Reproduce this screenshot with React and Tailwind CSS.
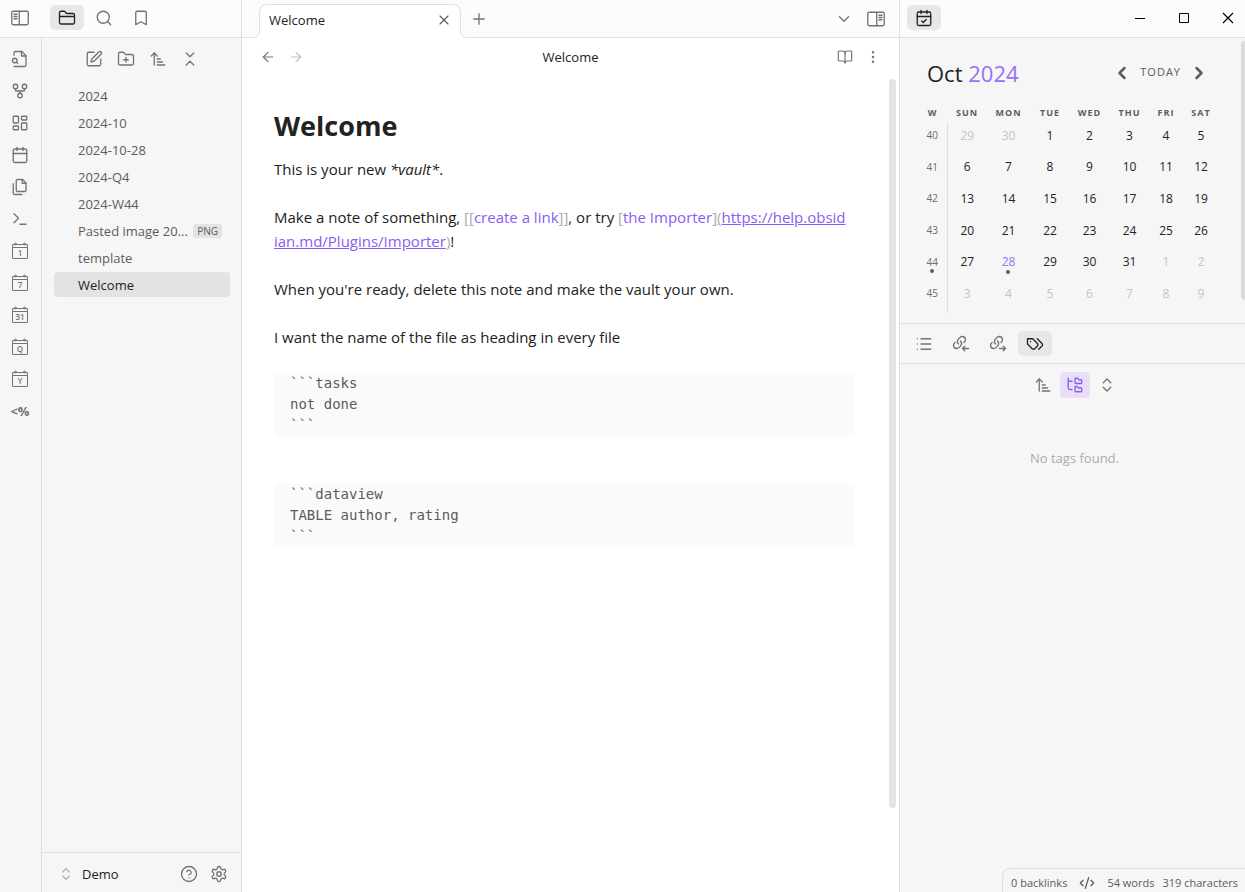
import React from "react";
import {
  ArrowLeft,
  ArrowRight,
  ArrowUpNarrowWide,
  Bookmark,
  BookOpen,
  Calendar,
  CalendarCheck,
  ChevronDown,
  ChevronLeft,
  ChevronRight,
  ChevronsDownUp,
  ChevronsUpDown,
  CircleQuestionMark,
  CodeXml,
  EllipsisVertical,
  FolderClosed,
  FolderPlus,
  FolderTree,
  GitFork,
  LayoutDashboard,
  List,
  Plus,
  Search,
  SquarePen,
  Terminal,
  X,
} from "lucide-react";

const ICON = { size: 18, strokeWidth: 1.75 };

function Svg({ children, size = 18, className = "" }) {
  return (
    <svg
      width={size}
      height={size}
      viewBox="0 0 24 24"
      fill="none"
      stroke="currentColor"
      strokeWidth="1.75"
      strokeLinecap="round"
      strokeLinejoin="round"
      className={className}
      aria-hidden="true"
    >
      {children}
    </svg>
  );
}

function SidebarIcon({ right = false }) {
  return (
    <Svg className={right ? "-scale-x-100" : ""}>
      <rect x="1" y="3" width="22" height="18" rx="2" />
      <path d="M11 3v18M4 7h4M4 10h4M4 13h4" />
    </Svg>
  );
}

function FileSearchIcon() {
  return (
    <Svg>
      <path d="M4 22h14a2 2 0 0 0 2-2V7.5L14.5 2H6a2 2 0 0 0-2 2v3" />
      <path d="M14 2v6h6" />
      <circle cx="5" cy="14" r="3" />
      <path d="m9 18-1.5-1.5" />
    </Svg>
  );
}

function FilesIcon() {
  return (
    <Svg>
      <path d="M15.5 2H8.6c-.4 0-.8.2-1.1.5-.3.3-.5.7-.5 1.1v12.8c0 .4.2.8.5 1.1.3.3.7.5 1.1.5h9.8c.4 0 .8-.2 1.1-.5.3-.3.5-.7.5-1.1V6.5L15.5 2z" />
      <path d="M3 7.6v12.8c0 .4.2.8.5 1.1.3.3.7.5 1.1.5h9.8" />
      <path d="M15 2v5h5" />
    </Svg>
  );
}

function PeriodIcon({ label }) {
  return (
    <svg width="18" height="18" viewBox="0 0 18 18" fill="none" stroke="currentColor" aria-hidden="true">
      <path d="M1.5 2.5h15v14h-15zM1.5 5.5h15" strokeWidth="1" />
      <circle cx="4.5" cy="2" r="1" strokeWidth="1" />
      <circle cx="13.5" cy="2" r="1" strokeWidth="1" />
      <text
        x="9"
        y="14"
        textAnchor="middle"
        fontSize="8"
        fontWeight="600"
        fill="currentColor"
        stroke="none"
      >
        {label}
      </text>
    </svg>
  );
}

const LINK_PATHS = (
  <>
    <path d="M8.7 12a4.9 4.9 0 0 1-.46-6.31l2.56-2.51A4.3 4.3 0 0 1 13.79 2a4.27 4.27 0 0 1 4.21 4.15 4.1 4.1 0 0 1-1.19 2.94l-.91.91" />
    <path d="M11.3 8a4.9 4.9 0 0 1 .45 6.31L9.2 16.82A4.3 4.3 0 0 1 6.21 18 4.27 4.27 0 0 1 2 13.85a4.1 4.1 0 0 1 1.19-2.94L4.1 10" />
  </>
);

function BacklinksIcon() {
  return (
    <Svg>
      {LINK_PATHS}
      <path d="m17 21-3-3 3-3M22 18h-8" />
    </Svg>
  );
}

function OutgoingIcon() {
  return (
    <Svg>
      {LINK_PATHS}
      <path d="m19 21 3-3-3-3M14 18h8" />
    </Svg>
  );
}

function TagsIcon() {
  return (
    <Svg>
      <path d="M9 5H2v7l6.29 6.29c.94.94 2.48.94 3.42 0l3.58-3.58c.94-.94.94-2.48 0-3.42L9 5Z" />
      <path d="M6 9.01V9" />
      <path d="m15 5 6.3 6.3a2.4 2.4 0 0 1 0 3.4L17 19" />
    </Svg>
  );
}

function GearIcon() {
  return (
    <Svg>
      <path d="M12.22 2h-.44a2 2 0 0 0-2 2v.18a2 2 0 0 1-1 1.73l-.43.25a2 2 0 0 1-2 0l-.15-.08a2 2 0 0 0-2.73.73l-.22.38a2 2 0 0 0 .73 2.73l.15.1a2 2 0 0 1 1 1.72v.51a2 2 0 0 1-1 1.74l-.15.09a2 2 0 0 0-.73 2.73l.22.38a2 2 0 0 0 2.73.73l.15-.08a2 2 0 0 1 2 0l.43.25a2 2 0 0 1 1 1.73V20a2 2 0 0 0 2 2h.44a2 2 0 0 0 2-2v-.18a2 2 0 0 1 1-1.73l.43-.25a2 2 0 0 1 2 0l.15.08a2 2 0 0 0 2.73-.73l.22-.39a2 2 0 0 0-.73-2.73l-.15-.08a2 2 0 0 1-1-1.74v-.5a2 2 0 0 1 1-1.74l.15-.09a2 2 0 0 0 .73-2.73l-.22-.38a2 2 0 0 0-2.73-.73l-.15.08a2 2 0 0 1-2 0l-.43-.25a2 2 0 0 1-1-1.73V4a2 2 0 0 0-2-2z" />
      <circle cx="12" cy="12" r="3" />
    </Svg>
  );
}

function TabButton({ label, active = false, children }) {
  return (
    <button
      type="button"
      aria-label={label}
      className={
        active
          ? "flex h-[25px] w-[34px] items-center justify-center rounded-[5px] bg-[#e7e7e7] text-[#222]"
          : "flex h-[25px] w-[34px] items-center justify-center rounded-[5px] text-[#737373]"
      }
    >
      {children}
    </button>
  );
}

function IconButton({ label, children }) {
  return (
    <button type="button" aria-label={label} className="flex h-6 w-6 items-center justify-center">
      {children}
    </button>
  );
}

const RIBBON = [
  ["Quick switcher", <FileSearchIcon />],
  ["Graph view", <GitFork {...ICON} />],
  ["Canvas", <LayoutDashboard {...ICON} />],
  ["Daily note", <Calendar {...ICON} />],
  ["Templates", <FilesIcon />],
  ["Command palette", <Terminal {...ICON} />],
  ["Open daily note", <PeriodIcon label="1" />],
  ["Open weekly note", <PeriodIcon label="7" />],
  ["Open monthly note", <PeriodIcon label="31" />],
  ["Open quarterly note", <PeriodIcon label="Q" />],
  ["Open yearly note", <PeriodIcon label="Y" />],
  ["Templater", <span className="text-[13px] font-bold">&lt;%</span>],
];

const FILES = [
  { name: "2024" },
  { name: "2024-10" },
  { name: "2024-10-28" },
  { name: "2024-Q4" },
  { name: "2024-W44" },
  { name: "Pasted image 20...", tag: "PNG" },
  { name: "template" },
  { name: "Welcome", active: true },
];

function LeftSide() {
  return (
    <aside className="flex w-[242px] shrink-0 flex-col border-r border-[#e0e0e0]">
      <header className="flex h-[38px] shrink-0 items-start border-b border-[#e0e0e0] bg-[#fcfcfc] pt-[5px]">
        <div className="flex h-[25px] w-[50px] items-center pl-[11px] text-[#737373]">
          <button type="button" aria-label="Toggle left sidebar">
            <SidebarIcon />
          </button>
        </div>
        <nav className="flex gap-[3px]">
          <TabButton label="Files" active>
            <FolderClosed {...ICON} />
          </TabButton>
          <TabButton label="Search">
            <Search {...ICON} />
          </TabButton>
          <TabButton label="Bookmarks">
            <Bookmark {...ICON} />
          </TabButton>
        </nav>
      </header>
      <div className="flex min-h-0 flex-1 bg-[#f6f6f6]">
        <nav className="flex w-[42px] shrink-0 flex-col items-center gap-2 border-r border-[#e0e0e0] pt-[9px] pr-px text-[#737373]">
          {RIBBON.map(([label, icon]) => (
            <IconButton key={label} label={label}>
              {icon}
            </IconButton>
          ))}
        </nav>
        <div className="flex min-w-0 flex-1 flex-col">
          <div className="flex justify-center gap-2 pt-[9px] text-[#737373]">
            <IconButton label="New note">
              <SquarePen {...ICON} />
            </IconButton>
            <IconButton label="New folder">
              <FolderPlus {...ICON} />
            </IconButton>
            <IconButton label="Change sort order">
              <ArrowUpNarrowWide {...ICON} />
            </IconButton>
            <IconButton label="Collapse all">
              <ChevronsDownUp {...ICON} />
            </IconButton>
          </div>
          <ul className="flex flex-1 flex-col gap-0.5 pt-3 pr-[11px] pl-3">
            {FILES.map((f) => (
              <li key={f.name}>
                <button
                  type="button"
                  className={
                    f.active
                      ? "flex h-[25px] w-full items-center justify-between rounded bg-[#e3e3e3] pr-2 pl-6 text-left text-[#222]"
                      : "flex h-[25px] w-full items-center justify-between rounded pr-2 pl-6 text-left text-[#5c5c5c]"
                  }
                >
                  <span className="whitespace-nowrap">{f.name}</span>
                  {f.tag && (
                    <span className="rounded-[3px] bg-[#e3e3e3] px-1 text-[10px] leading-[14px] font-medium">{f.tag}</span>
                  )}
                </button>
              </li>
            ))}
          </ul>
          <footer className="flex h-10 shrink-0 items-center border-t border-[#e0e0e0] pt-0.5 pr-[13px] pl-4 text-[#737373]">
            <button type="button" className="flex flex-1 items-center gap-2">
              <ChevronsUpDown size={16} strokeWidth={1.75} className="text-[#ababab]" />
              <span className="font-medium text-[#222]">Demo</span>
            </button>
            <div className="flex gap-3">
              <button type="button" aria-label="Help">
                <CircleQuestionMark {...ICON} />
              </button>
              <button type="button" aria-label="Settings">
                <GearIcon />
              </button>
            </div>
          </footer>
        </div>
      </div>
    </aside>
  );
}

function TabFlare({ className }) {
  return (
    <svg width="7" height="7" viewBox="0 0 7 7" className={className} aria-hidden="true">
      <path d="M0 7V6A5.5 5.5 0 0 0 5.5 0H7V7Z" fill="#fff" />
      <path d="M0 6.5A6.5 6.5 0 0 0 6.5 0" fill="none" stroke="#e0e0e0" />
    </svg>
  );
}

function CodeBlock({ children }) {
  return (
    <pre className="rounded bg-[#fafafa] px-4 font-['DejaVu_Sans_Mono','Liberation_Mono',monospace] text-sm leading-[21px] text-[#5c5c5c]">
      {children}
    </pre>
  );
}

function Main() {
  return (
    <main className="flex min-w-0 flex-1 flex-col bg-white">
      <header className="flex h-[38px] shrink-0 items-end justify-between border-b border-[#e0e0e0] bg-[#fcfcfc] pr-3.5 pl-[17px]">
        <div className="flex items-end gap-1.5">
          <div className="relative -mb-px flex h-[34px] w-[202px] items-center justify-between rounded-t-lg border border-b-0 border-[#e0e0e0] bg-white pr-2 pb-[3px] pl-[9px]">
            <TabFlare className="absolute bottom-0 -left-[7px]" />
            <TabFlare className="absolute -right-[7px] bottom-0 -scale-x-100" />
            <span className="text-[#222]">Welcome</span>
            <button type="button" aria-label="Close tab" className="text-[#5c5c5c]">
              <X size={16} strokeWidth={1.75} />
            </button>
          </div>
          <button type="button" aria-label="New tab" className="flex h-[37px] w-6 items-center justify-center text-[#737373]">
            <Plus {...ICON} />
          </button>
        </div>
        <div className="flex h-[37px] items-center gap-3.5 text-[#737373]">
          <button type="button" aria-label="Tab list">
            <ChevronDown {...ICON} />
          </button>
          <button type="button" aria-label="Toggle right sidebar">
            <SidebarIcon right />
          </button>
        </div>
      </header>
      <div className="flex h-[38px] shrink-0 items-center justify-between px-[18px] pb-px text-[#737373]">
        <div className="flex gap-3">
          <button type="button" aria-label="Back">
            <ArrowLeft size={16} strokeWidth={1.75} />
          </button>
          <button type="button" aria-label="Forward" className="text-[#c0c0c0]">
            <ArrowRight size={16} strokeWidth={1.75} />
          </button>
        </div>
        <span className="text-[#222]">Welcome</span>
        <div className="flex gap-3">
          <button type="button" aria-label="Reading view">
            <BookOpen size={16} strokeWidth={1.75} />
          </button>
          <button type="button" aria-label="More options">
            <EllipsisVertical size={16} strokeWidth={1.75} />
          </button>
        </div>
      </div>
      <div className="flex min-h-0 flex-1 justify-between pr-[3px] pl-8">
        <article className="w-[581px] pt-[30px] text-[15px] leading-6 text-[#222]">
          <h1 className="text-[27px] leading-10 font-bold">Welcome</h1>
          <p className="mt-[11px]">
            This is your new <em>*vault*</em>.
          </p>
          <p className="mt-6 whitespace-nowrap">
            Make a note of something, <span className="text-[#ababab]">[[</span>
            <a href="#create" className="text-[#8a5cf5]">create a link</a>
            <span className="text-[#ababab]">]]</span>, or try <span className="text-[#ababab]">[</span>
            <a href="#importer" className="text-[#8a5cf5]">the Importer</a>
            <span className="text-[#ababab]">]</span>
            <span className="text-[#ababab] underline">(</span>
            <a href="#url" className="text-[#8a5cf5] underline">
              https://help.obsid
              <br />
              ian.md/Plugins/Importer
            </a>
            <span className="text-[#ababab] underline">)</span>!
          </p>
          <p className="mt-6">When you're ready, delete this note and make the vault your own.</p>
          <p className="mt-6">I want the name of the file as heading in every file</p>
          <div className="mt-6 flex flex-col gap-12">
            <CodeBlock>{"```tasks\nnot done\n```"}</CodeBlock>
            <CodeBlock>{"```dataview\nTABLE author, rating\n```"}</CodeBlock>
          </div>
        </article>
        <div className="mt-[3px] mb-[84px] w-[7px] rounded bg-[#e4e4e4]" />
      </div>
    </main>
  );
}

const WEEKS = [
  [40, [29, 30, 1, 2, 3, 4, 5]],
  [41, [6, 7, 8, 9, 10, 11, 12]],
  [42, [13, 14, 15, 16, 17, 18, 19]],
  [43, [20, 21, 22, 23, 24, 25, 26]],
  [44, [27, 28, 29, 30, 31, 1, 2]],
  [45, [3, 4, 5, 6, 7, 8, 9]],
];

function dayClass(week, day) {
  if ((week === 40 && day > 20) || (week === 44 && day < 20) || week === 45) return "relative text-[#c4c4c4]";
  if (day === 28) return "relative text-[#9873f7]";
  return "relative text-[#222]";
}

function Dot() {
  return <span className="absolute top-full left-1/2 h-1 w-1 -translate-x-1/2 rounded-full bg-[#5c5c5c]" />;
}

function CalendarPanel() {
  return (
    <section className="flex h-[286px] shrink-0 justify-between border-b border-[#e0e0e0] pl-[18px]">
      <div className="w-[302px]">
        <div className="flex items-center justify-between pt-[17px] pr-[11px] pl-[9px]">
          <h2 className="text-[22px] leading-9 font-medium text-[#222]">
            Oct <span className="text-[#9873f7]">2024</span>
          </h2>
          <div className="flex items-center gap-2 text-[#5c5c5c]">
            <button type="button" aria-label="Previous month">
              <ChevronLeft size={20} strokeWidth={3} />
            </button>
            <button type="button" className="pb-0.5 text-[11px] tracking-[1px]">
              TODAY
            </button>
            <button type="button" aria-label="Next month">
              <ChevronRight size={20} strokeWidth={3} />
            </button>
          </div>
        </div>
        <table className="mt-3 h-[210px] w-full table-fixed border-collapse text-center text-xs">
          <colgroup>
            <col className="w-[29px]" />
            <col className="w-[40px]" />
            <col className="w-[43px]" />
            <col className="w-[40px]" />
            <col className="w-[39px]" />
            <col className="w-[41px]" />
            <col className="w-[32px]" />
            <col className="w-[38px]" />
          </colgroup>
          <thead>
            <tr className="h-5 text-[9px] tracking-[1px] text-[#5c5c5c]">
              {["W", "SUN", "MON", "TUE", "WED", "THU", "FRI", "SAT"].map((d) => (
                <th key={d} className="p-0 font-bold">
                  {d}
                </th>
              ))}
            </tr>
          </thead>
          <tbody>
            {WEEKS.map(([week, days]) => (
              <tr key={week}>
                <td className="border-r border-[#e0e0e0] p-0 pb-1.5 text-[10px] text-[#6c6c6c]">
                  <button type="button" className="relative">
                    {week}
                    {week === 44 && <Dot />}
                  </button>
                </td>
                {days.map((day) => (
                  <td key={day} className="p-0 pb-1.5">
                    <button type="button" className={dayClass(week, day)}>
                      {day}
                      {day === 28 && <Dot />}
                    </button>
                  </td>
                ))}
              </tr>
            ))}
          </tbody>
        </table>
      </div>
      <div className="mt-[3px] mb-[23px] w-1 rounded-l bg-[#dcdcdc]" />
    </section>
  );
}

function RightSide() {
  return (
    <aside className="flex w-[346px] shrink-0 flex-col border-l border-[#e0e0e0] bg-[#f6f6f6]">
      <header className="flex h-[38px] shrink-0 items-start justify-between border-b border-[#e0e0e0] bg-[#fcfcfc] pt-[5px] pr-[11px] pl-[7px]">
        <TabButton label="Calendar" active>
          <CalendarCheck {...ICON} />
        </TabButton>
        <div className="flex h-[25px] items-center gap-8 text-black">
          <button type="button" aria-label="Minimize">
            <svg width="12" height="12" viewBox="0 0 12 12" fill="none" stroke="currentColor"><path d="M1 6.5h10" /></svg>
          </button>
          <button type="button" aria-label="Maximize">
            <svg width="12" height="12" viewBox="0 0 12 12" fill="none" stroke="currentColor"><path d="M1.5 1.5h9v9h-9z" /></svg>
          </button>
          <button type="button" aria-label="Close">
            <svg width="12" height="12" viewBox="0 0 12 12" fill="none" stroke="currentColor" strokeWidth="1.2"><path d="m1 1 10 10M11 1 1 11" /></svg>
          </button>
        </div>
      </header>
      <CalendarPanel />
      <nav className="flex h-10 shrink-0 items-center gap-[3px] border-b border-[#e0e0e0] pl-[7px]">
        <TabButton label="Outline">
          <List {...ICON} />
        </TabButton>
        <TabButton label="Backlinks">
          <BacklinksIcon />
        </TabButton>
        <TabButton label="Outgoing links">
          <OutgoingIcon />
        </TabButton>
        <TabButton label="Tags" active>
          <TagsIcon />
        </TabButton>
      </nav>
      <div className="flex flex-1 flex-col pl-1">
        <div className="flex items-center justify-center gap-0.5 pt-2 text-[#737373]">
          <button type="button" aria-label="Change sort order" className="flex h-[26px] w-[30px] items-center justify-center">
            <ArrowUpNarrowWide {...ICON} />
          </button>
          <button type="button" aria-label="Show nested tags" className="flex h-[26px] w-[30px] items-center justify-center rounded bg-[#e8dff7] text-[#8a5cf5]">
            <FolderTree {...ICON} />
          </button>
          <button type="button" aria-label="Expand all" className="flex h-[26px] w-[30px] items-center justify-center">
            <ChevronsUpDown {...ICON} />
          </button>
        </div>
        <p className="pt-[50px] text-center text-[#ababab]">No tags found.</p>
      </div>
      <footer className="flex h-6 shrink-0 items-center self-end rounded-tl-lg border-t border-l border-[#e0e0e0] pt-1 pr-[7px] pl-2 text-[11px] whitespace-nowrap text-[#5c5c5c]">
        <span>0 backlinks</span>
        <CodeXml size={16} strokeWidth={2} className="mx-3" />
        <span>54 words</span>
        <span className="ml-2">319 characters</span>
      </footer>
    </aside>
  );
}

export default function App() {
  return (
    <div className="flex h-screen font-['Open_Sans','Noto_Sans',sans-serif] text-[13px] leading-5">
      <LeftSide />
      <Main />
      <RightSide />
    </div>
  );
}
